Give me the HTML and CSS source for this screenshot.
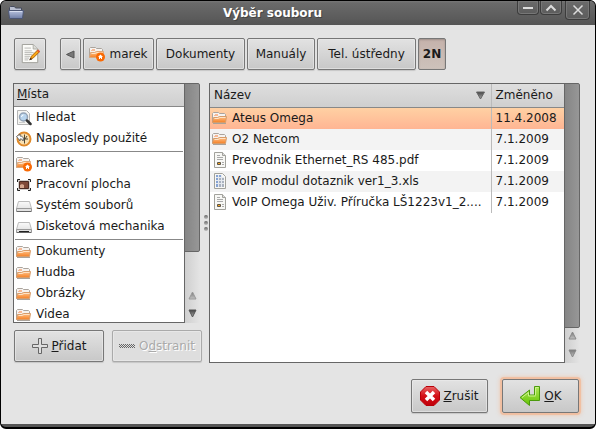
FILE: index.html
```html
<!DOCTYPE html>
<html lang="cs">
<head>
<meta charset="utf-8">
<title>Výběr souboru</title>
<link rel="stylesheet" href="styles.css">
</head>
<body>
<svg class="defs" aria-hidden="true">
  <defs>
    <linearGradient id="orange" x1="0" y1="0" x2="0" y2="1"><stop offset="0" stop-color="#ffc58e"/><stop offset="1" stop-color="#f58025"/></linearGradient>
    <linearGradient id="blue" x1="0" y1="0" x2="0" y2="1"><stop offset="0" stop-color="#bac4e0"/><stop offset="1" stop-color="#707fa8"/></linearGradient>
    <linearGradient id="red" x1="0" y1="0" x2="0" y2="1"><stop offset="0" stop-color="#e86464"/><stop offset=".5" stop-color="#d40f16"/><stop offset="1" stop-color="#c0000a"/></linearGradient>
    <linearGradient id="green" x1="0" y1="0" x2="0" y2="1"><stop offset="0" stop-color="#b2e85c"/><stop offset="1" stop-color="#63c303"/></linearGradient>
    <linearGradient id="grey" x1="0" y1="0" x2="0" y2="1"><stop offset="0" stop-color="#fafafa"/><stop offset="1" stop-color="#dcdcdc"/></linearGradient>
    <linearGradient id="tri" x1="0" y1="0" x2="0" y2="1"><stop offset="0" stop-color="#444"/><stop offset="1" stop-color="#aaa"/></linearGradient>
    <linearGradient id="triup" x1="0" y1="0" x2="0" y2="1"><stop offset="0" stop-color="#777"/><stop offset="1" stop-color="#c4c4c4"/></linearGradient>
    <symbol id="folder" viewBox="0 0 16 16">
      <path d="M.5 12.500V3.500l1-1h5l1 1h5l1 1v3" fill="#f6f3f0" stroke="#aba49d"/>
      <path d="M2 5.500h4M3 4.500h3" stroke="#f7b995"/>
      <path d="M.500 12.500l1-5h4l2-1h7l-1 6z" fill="url(#orange)" stroke="#d79c6a"/>
      <path d="M2.500 8.500h3.500l2-1h5.500" stroke="#ffe3c6"/>
      <path d="M1 13.500h13" stroke="#aaa29a"/>
    </symbol>
    <symbol id="home" viewBox="0 0 16 16">
      <path d="M.5 11.500V2.500l1-1h5l1 1h5l1 1v3" fill="#f6f3f0" stroke="#aba49d"/>
      <path d="M2 4.500h4M3 3.500h3" stroke="#f7b995"/>
      <path d="M.500 11.500l1-5h4l2-1h7l-1 6z" fill="url(#orange)" stroke="#dba67a"/>
      <path d="M2.500 7.500h3.500l2-1h5.500" stroke="#ffe3c6"/>
      <circle cx="11.500" cy="11" r="4.500" fill="#f96a05"/>
      <path d="M11.500 8.500l2.500 2.500h-1v2h-1v-1h-1v1h-1v-2H9z" fill="#fff"/>
    </symbol>
    <symbol id="drive" viewBox="0 0 16 16">
      <path d="M2.500 3.500h11l2 7v3H.5v-3z" fill="url(#grey)" stroke="#bbb"/>
      <path d="M.5 10.500h15v3H.5z" fill="#e2e2e2" stroke="#999"/>
      <path d="M1 13.500h14" stroke="#666"/>
    </symbol>
    <symbol id="doc" viewBox="0 0 16 16">
      <path d="M2.500.5h8l3 3v12h-11z" fill="#f8f8f5" stroke="#a2a29c"/>
      <path d="M10.500.5v3h3" fill="#ddd" stroke="#a2a29c"/>
      <path d="M5 3.500h3M5 5.500h6M5 7.500h6M10 10.500h2M10 12.500h2" stroke="#aaa"/>
      <path d="M5.500 10.500h3v2h-3z" fill="#f7a51e" stroke="#5d5548"/>
    </symbol>
    <symbol id="sheet" viewBox="0 0 16 16">
      <path d="M2.500.5h8l3 3v12h-11z" fill="#f8f8f5" stroke="#a2a29c"/>
      <path d="M4 2h6v2h2v10H4z" fill="#aab2be"/>
      <path d="M4 2h6v2H4zM4 2h2v12H4z" fill="#86a3d3"/>
      <path d="M4 4.500h8M4 7.500h8M4 10.500h8M6.500 2v12M9.500 2v12" stroke="#e5e9ef"/>
    </symbol>
  </defs>
</svg>

<main class="window">
  <header class="titlebar">
    <svg class="icon" viewBox="0 0 16 16" aria-hidden="true">
      <path d="M1.500 13V2.500l1-1h4l1 1.500h6V6" fill="#b9bfd0" stroke="#454b5d"/>
      <path d="M.5 5.500h15l-1 8h-13z" fill="url(#blue)" stroke="#4c5674"/>
      <path d="M2 6.500h12" stroke="#d7def0"/>
    </svg>
    <h1 class="title">Výběr souboru</h1>
    <div class="controls">
      <button class="control" type="button" aria-label="Minimalizovat"><svg viewBox="0 0 12 12"><path d="M1 6h10" /></svg></button>
      <button class="control" type="button" aria-label="Maximalizovat"><svg viewBox="0 0 12 12"><path d="M1.500 8.500L6 4l4.500 4.500"/></svg></button>
      <button class="control close" type="button" aria-label="Zavřít"><svg viewBox="0 0 12 12"><path d="M1.500 1.500l9 9M10.500 1.500l-9 9"/></svg></button>
    </div>
  </header>

  <div class="content">
    <nav class="toolbar">
      <button class="button edit" type="button" aria-label="Zadat název souboru">
        <svg class="icon-large" viewBox="0 0 22 22" aria-hidden="true">
          <path d="M2.500.5h12l5 5v15h-17z" fill="#fbfbf8" stroke="#9a9a94"/>
          <path d="M14.500.5v5h5" fill="#dcdcd8" stroke="#aaaaa4"/>
          <path d="M5 4.500h7M5 7.500h8M5 9.500h10M5 11.500h8M5 13.500h6M5 15.500h5M5 17.500h4" stroke="#b4b4b0"/>
          <path d="M11.500 16.500l1-3 7-7 2 2-7 7z" fill="#f9a814" stroke="#a85a08"/>
          <path d="M18.500 7.500l1.500-1.500 2 2-1.500 1.500z" fill="#e35b35"/>
          <path d="M10 18l1.500-3 2 2z" fill="#492a12"/>
        </svg>
      </button>
      <div class="path">
        <button class="button back" type="button" aria-label="Zpět"><svg class="arrow" viewBox="0 0 9 9"><path d="M.5 4.500L8 1v7z" fill="#777" stroke="#555"/></svg></button>
        <button class="button home" type="button"><svg class="icon"><use href="#home"/></svg>marek</button>
        <button class="button docs" type="button">Dokumenty</button>
        <button class="button manuals" type="button">Manuály</button>
        <button class="button phones" type="button">Tel. ústředny</button>
        <button class="button current" type="button" aria-pressed="true">2N</button>
      </div>
    </nav>

    <div class="panes">
      <section class="places">
        <div class="scroller">
          <div class="list">
            <h2 class="heading"><u>M</u>ísta</h2>
            <ul class="items">
              <li><svg class="icon" viewBox="0 0 16 16"><path d="M1.500.5h9l3 3v11h-12z" fill="#f5f5f2" stroke="#b5b5b5"/><path d="M3 12.500h6" stroke="#ccc"/><circle cx="7.500" cy="7" r="4" fill="#b8d4ed" stroke="#93a3b6" stroke-width="1.500"/><path d="M5.500 7a2 2 0 0 1 2-2" stroke="#fff"/><path d="M11 10.500l3.500 3.500" stroke="#333" stroke-width="2.500" stroke-linecap="round"/></svg>Hledat</li>
              <li><svg class="icon" viewBox="0 0 16 16"><circle cx="8" cy="8" r="6.500" fill="#fae0b0" stroke="#e08a2a" stroke-width="2"/><path d="M8.500 3.500v9M6 8h6M9 8l2-3" stroke="#4f4632"/><path d="M.5 5.500L4 3v2c3 0 4 2 3 5-1-2-1-2-3-2v2z" fill="#fff" stroke="#666"/></svg>Naposledy použité</li>
              <li class="divider" role="separator"></li>
              <li><svg class="icon"><use href="#home"/></svg>marek</li>
              <li><svg class="icon" viewBox="0 0 16 16"><path d="M2 3h12v10H2z" fill="#d3cfcb"/><path d="M3.500 4.500h9v7h-9z" fill="#804a37" stroke="#4b2b22"/><path d="M4 8l2-1 2 1v3H4z" fill="#d7a88e"/><path d="M1.500 5V2.500H4M12 2.500h2.500V5M14.500 11v2.500H12M4 13.500H1.500V11" stroke="#222"/></svg>Pracovní plocha</li>
              <li><svg class="icon"><use href="#drive"/></svg>Systém souborů</li>
              <li><svg class="icon" viewBox="0 0 16 16"><use href="#drive"/><path d="M3 12.500h10" stroke="#222"/></svg>Disketová mechanika</li>
              <li class="divider" role="separator"></li>
              <li><svg class="icon"><use href="#folder"/></svg>Dokumenty</li>
              <li><svg class="icon"><use href="#folder"/></svg>Hudba</li>
              <li><svg class="icon"><use href="#folder"/></svg>Obrázky</li>
              <li><svg class="icon"><use href="#folder"/></svg>Videa</li>
            </ul>
          </div>
          <div class="scrollbar">
            <div class="thumb thumb-places"></div>
            <svg class="arrow" viewBox="0 0 9 9"><path d="M4.500 1L8 8H1z" fill="url(#triup)" stroke="#999"/></svg>
            <svg class="arrow" viewBox="0 0 9 9"><path d="M4.500 8L8 1H1z" fill="url(#tri)" stroke="#555"/></svg>
          </div>
        </div>
        <div class="place-actions">
          <button class="button" type="button"><svg class="icon" viewBox="0 0 16 16"><path d="M6.500.5h3v6h6v3h-6v6h-3v-6h-6v-3h6z" fill="#dedede" stroke="#666"/></svg><span><u>P</u>řidat</span></button>
          <button class="button" type="button" disabled><svg class="icon" viewBox="0 0 16 16"><path d="M0 6.500h16M0 8.500h16" stroke="#666" stroke-dasharray="1 1"/><path d="M1 7.500h15M1 9.500h15" stroke="#666" stroke-dasharray="1 1"/></svg><span>O<u>d</u>stranit</span></button>
        </div>
      </section>

      <div class="grip"><i></i><i></i><i></i></div>

      <section class="scroller files">
        <div class="list">
          <table class="table">
            <colgroup><col><col class="date"></colgroup>
            <thead><tr><th><span class="sort">Název<svg class="arrow" viewBox="0 0 9 9"><path d="M4.500 8L8.500 1H.5z" fill="url(#tri)" stroke="#666"/></svg></span></th><th>Změněno</th></tr></thead>
            <tbody>
              <tr class="selected"><td><span class="name"><svg class="icon"><use href="#folder"/></svg>Ateus Omega</span></td><td>11.4.2008</td></tr>
              <tr><td><span class="name"><svg class="icon"><use href="#folder"/></svg>O2 Netcom</span></td><td>7.1.2009</td></tr>
              <tr><td><span class="name"><svg class="icon"><use href="#doc"/></svg>Prevodnik Ethernet_RS 485.pdf</span></td><td>7.1.2009</td></tr>
              <tr><td><span class="name"><svg class="icon"><use href="#sheet"/></svg>VoIP modul dotaznik ver1_3.xls</span></td><td>7.1.2009</td></tr>
              <tr><td><span class="name"><svg class="icon"><use href="#doc"/></svg>VoIP Omega Uživ. Příručka LŠ1223v1_2....</span></td><td>7.1.2009</td></tr>
            </tbody>
          </table>
        </div>
        <div class="scrollbar">
          <div class="thumb thumb-files"></div>
          <svg class="arrow" viewBox="0 0 9 9"><path d="M4.500 1L8 8H1z" fill="url(#triup)" stroke="#888"/></svg>
          <svg class="arrow" viewBox="0 0 9 9"><path d="M4.500 8L8 1H1z" fill="url(#triup)" stroke="#888"/></svg>
        </div>
      </section>
    </div>

    <footer class="actions">
      <button class="button" type="button"><svg class="icon-large" viewBox="0 0 20 20"><path d="M6 .5h8L19.500 6v8L14 19.500H6L.5 14V6z" fill="url(#red)" stroke="#b80009"/><path d="M6 6l8 8M14 6l-8 8" stroke="#fff" stroke-width="3.500"/></svg><span><u>Z</u>rušit</span></button>
      <button class="button default" type="button"><svg class="enter" viewBox="0 0 22 22"><path d="M15.500 1.500h5v14h-10v5L1 12.500 10.500 5v5h5z" fill="url(#green)" stroke="#4b9a0c" stroke-linejoin="round"/><path d="M16.500 10.500v-8h3M16.500 11h-7V7.500L3 12.500" stroke="#cdf291"/></svg><span><u>O</u>K</span></button>
    </footer>
  </div>
</main>
</body>
</html>
```

FILE: styles.css
```css
* { box-sizing: border-box; }

body {
  margin: 0;
  background: #fff;
  color: #1a1a1a;
  font: 12px/21px "DejaVu Sans", sans-serif;
}

h1, h2, ul { margin: 0; padding: 0; font-size: inherit; }
svg { flex: none; fill: none; }
.defs { position: absolute; width: 0; height: 0; }
.icon { width: 16px; height: 16px; }
.icon-large { width: 20px; height: 20px; }
.enter { width: 22px; height: 22px; }
.arrow { width: 9px; height: 9px; }

.window {
  display: flex;
  flex-direction: column;
  height: 100vh;
  border: 1px solid #000;
  border-bottom-width: 2px;
  border-radius: 6px;
  background: #555;
  overflow: hidden;
}

.titlebar {
  display: flex;
  align-items: center;
  height: 24px;
  padding: 0 5px 0 7px;
  background: linear-gradient(#777 0, #6a6a6a 2px, #555 100%);
}
.title {
  flex: 1;
  padding-left: 4px;
  color: #fff;
  font-weight: bold;
  text-align: center;
  text-shadow: 1px 1px #444;
}
.controls { display: flex; align-items: flex-start; align-self: stretch; gap: 1px; }
.control {
  display: grid;
  place-items: center;
  width: 22px;
  height: 14px;
  padding: 0;
  border: 1px solid #3c3c3c;
  border-top: 0;
  border-radius: 0 0 4px 4px;
  background: linear-gradient(#6b6b6b, #5c5c5c);
  box-shadow: inset 0 0 0 1px #777;
}
.control svg { width: 12px; height: 12px; stroke: #ddd; stroke-width: 2; }
.control.close { width: 25px; height: 19px; margin-left: 2px; }
.control.close svg { stroke-width: 1.5; }

.content {
  display: flex;
  flex: 1;
  flex-direction: column;
  min-height: 0;
  margin-bottom: 3px;
  padding: 13px 15px 11px 12px;
  background: #e4e4e4;
}

.button {
  display: flex;
  align-items: center;
  justify-content: center;
  gap: 4px;
  height: 32px;
  padding: 0;
  border: 1px solid #777;
  border-radius: 2px;
  background: linear-gradient(#e2e2e2, #c8c8c8);
  box-shadow: inset 0 0 0 1px #ececec99, 0 1px 1px #0002;
  color: inherit;
  font: inherit;
  white-space: nowrap;
}
.button:disabled { border-color: #aaa; background: #dedede; color: #aaa; text-shadow: 1px 1px #fff; }

.toolbar { display: flex; gap: 14px; padding-left: 1px; }
.path { display: flex; gap: 2px; }
.edit { width: 32px; }
.back { width: 21px; }
.home { width: 71px; }
.docs { width: 89px; }
.manuals { width: 68px; }
.phones { width: 99px; }
.current { width: 28px; background: linear-gradient(#c5b2ab, #cdc2bb); box-shadow: inset 0 1px 2px #0003; font-weight: bold; }

.panes { display: flex; flex: 1; min-height: 0; margin-top: 13px; }
.places { display: flex; flex: none; flex-direction: column; width: 189px; }
.scroller { display: flex; flex: 1; min-width: 0; min-height: 0; }
.places .scroller { padding-right: 2px; }
.list { flex: 1; min-width: 0; border: 1px solid #666; border-right: 0; background: #fff; overflow: hidden; }
.heading, th {
  height: 23px;
  padding: 0 3px;
  border-bottom: 1px solid #888;
  background: linear-gradient(#dedede, #cfcfcf);
  font-weight: normal;
  text-align: left;
}
.items { list-style: none; }
.items li { display: flex; align-items: center; gap: 4px; height: 21px; padding-left: 2px; white-space: nowrap; }
.items .divider { height: 4px; margin: 0 1px; padding: 0; }
.divider::before { content: ""; flex: 1; height: 1px; background: #888; }

.scrollbar {
  display: flex;
  flex: none;
  flex-direction: column;
  align-items: center;
  width: 16px;
  padding-bottom: 5px;
  border-left: 1px solid #666;
  background: linear-gradient(90deg, #cfcfcf, #e4e4e4);
}
.thumb { align-self: stretch; margin: 0 0 auto -1px; border: 1px solid #666; border-radius: 0 2px 2px 0; background: linear-gradient(90deg, #858585, #979797); }
.thumb-places { flex: 0 0 72%; }
.thumb-files { flex: 0 0 89%; }
.arrow + .arrow { margin-top: 9px; }

.place-actions { display: grid; grid-template-columns: 1fr 1fr; gap: 8px; margin-top: 7px; padding: 0 0 1px 1px; }

.grip { display: flex; flex: none; flex-direction: column; align-items: center; justify-content: center; gap: 2px; width: 7px; }
.grip i { width: 4px; height: 4px; border-radius: 2px; background: linear-gradient(#666, #bbb); }

.table { width: 100%; border-collapse: collapse; table-layout: fixed; }
.date { width: 73px; }
th, td { padding: 0 4px; white-space: nowrap; }
th + th, td + td { border-left: 1px solid #bbb; }
td { height: 21px; padding-left: 2px; overflow: hidden; }
td:first-child { padding-right: 0; }
td + td { padding: 0 0 0 4px; }
.sort { display: flex; align-items: center; justify-content: space-between; padding-right: 2px; }
.name { display: flex; align-items: center; gap: 4px; }
tbody tr:nth-child(even) { background: #f3f3f3; }
tbody .selected { background: linear-gradient(#ffd2a4, #ffb593); }

.actions { display: flex; justify-content: flex-end; gap: 14px; margin-top: 16px; padding-right: 1px; }
.actions .button { width: 77px; height: 34px; gap: 3px; }
.actions .default { box-shadow: 0 0 0 2px #f3b48e99, 0 0 4px 2px #f6b28999; }
```
